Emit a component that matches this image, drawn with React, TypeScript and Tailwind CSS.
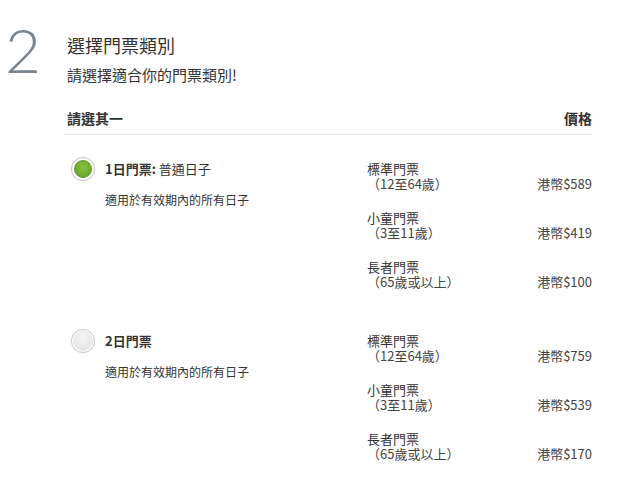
import React from "react";

const font = { fontFamily: '"Noto Sans CJK TC", "Noto Sans", sans-serif' };

type Row = { name: string; age: string; price: string };

const groups: { selected: boolean; bold: string; rest?: string; rows: Row[] }[] = [
  {
    selected: true,
    bold: "1日門票:",
    rest: " 普通日子",
    rows: [
      { name: "標準門票", age: "（12至64歲）", price: "港幣$589" },
      { name: "小童門票", age: "（3至11歲）", price: "港幣$419" },
      { name: "長者門票", age: "（65歲或以上）", price: "港幣$100" },
    ],
  },
  {
    selected: false,
    bold: "2日門票",
    rows: [
      { name: "標準門票", age: "（12至64歲）", price: "港幣$759" },
      { name: "小童門票", age: "（3至11歲）", price: "港幣$539" },
      { name: "長者門票", age: "（65歲或以上）", price: "港幣$170" },
    ],
  },
];

function Radio({ on }: { on: boolean }) {
  return (
    <div className="w-[24px] h-[24px] rounded-full border border-[#c9c9c9] bg-white flex items-center justify-center shrink-0 shadow-[0_0_1px_rgba(0,0,0,0.1)]">
      {on ? (
        <div className="w-[18px] h-[18px] rounded-full border border-[#5e9a2a] bg-[radial-gradient(circle_at_50%_40%,#86c146_0%,#6dad30_60%,#5e9a26_100%)]" />
      ) : (
        <div className="w-[20px] h-[20px] rounded-full bg-[radial-gradient(circle_at_50%_35%,#f4f4f4_0%,#e6e6e6_70%,#dcdcdc_100%)]" />
      )}
    </div>
  );
}

export default function App() {
  return (
    <div className="w-[624px] h-[486px] bg-white text-[#333] flex" style={font}>
      <div className="w-[64px] shrink-0 pt-[14px] pl-[5px]">
        <div
          className="text-[62px] leading-[70px] text-[#7a848c]"
          style={{ fontFamily: '"Lato", "Open Sans", sans-serif', fontWeight: 300 }}
        >
          2
        </div>
      </div>
      <div className="w-[528px] shrink-0">
        <div className="pl-[3px] pt-[33px]">
          <div className="text-[18px] leading-[24px] text-[#333]">選擇門票類別</div>
          <div className="text-[15px] leading-[20px] mt-[8px] text-[#333]">請選擇適合你的門票類別!</div>
        </div>
        <div className="mt-[23px] pb-[6px] border-b border-[#e3e3e3] flex justify-between pl-[3px]">
          <div className="text-[14px] leading-[20px] font-bold text-[#333]">請選其一</div>
          <div className="text-[14px] leading-[20px] font-bold text-[#333]">價格</div>
        </div>
        <div className="flex flex-col gap-[18px]">
          {groups.map((g, gi) => (
            <div key={gi} className="flex pt-[22px]">
              <div className="w-[303px] shrink-0 flex pl-[7px] gap-[10px]">
                <Radio on={g.selected} />
                <div>
                  <div className="text-[13px] leading-[24px] text-[#333]">
                    <span className="font-bold">{g.bold}</span>
                    {g.rest}
                  </div>
                  <div className="text-[12px] leading-[16px] mt-[11px] text-[#333]">適用於有效期內的所有日子</div>
                </div>
              </div>
              <div className="flex-1 mt-[4px] flex flex-col gap-[19px]">
                {g.rows.map((r, ri) => (
                  <div key={ri} className="flex justify-between items-end text-[13px] leading-[15px]">
                    <div>
                      <div className="text-[#333]">{r.name}</div>
                      <div className="text-[#444]">{r.age}</div>
                    </div>
                    <div className="text-[#444]">{r.price}</div>
                  </div>
                ))}
              </div>
            </div>
          ))}
        </div>
      </div>
    </div>
  );
}
